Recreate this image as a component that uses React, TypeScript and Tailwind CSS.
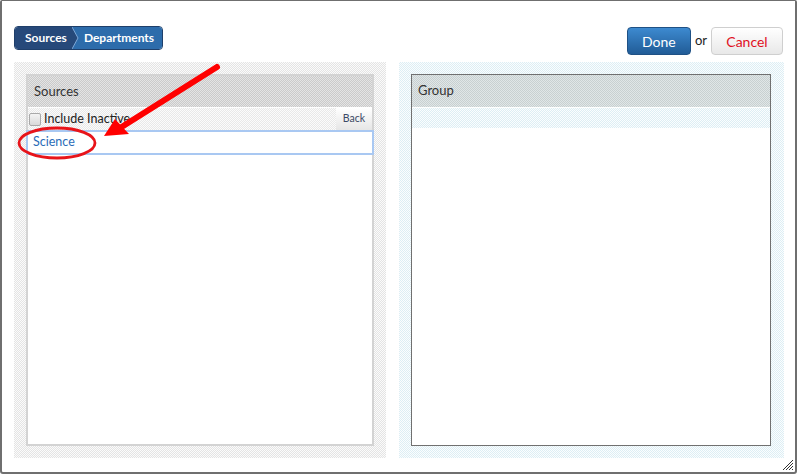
import React from "react";

const font = { fontFamily: "Lato, 'Open Sans', sans-serif" };

export default function App() {
  return (
    <div className="w-[798px] h-[475px] bg-white" style={font}>
      <div className="relative w-[797px] h-[474px] bg-white border-l-2 border-r-2 border-b-2 border-t border-[#6f6f6f] rounded-b-[3px] rounded-t-[2px] overflow-hidden">
        {/* top row */}
        <div className="flex justify-between pl-[12px] pr-[12px] h-[61px]">
          <div className="mt-[25px] flex h-[24px] rounded-[4px] overflow-hidden border border-[#1f3f6a] text-white text-[12px] font-bold leading-none">
            <div className="flex items-center pl-[10px] pr-[5px] bg-[#26497a]">Sources</div>
            <div className="relative w-[8px] bg-[#2d6cab]">
              <svg className="absolute inset-0" width="8" height="22" viewBox="0 0 8 22">
                <path d="M0 0 L6 11 L0 22 Z" fill="#26497a" />
                <path d="M0 0 L6 11 L0 22" fill="none" stroke="#7fa8d6" strokeWidth="1" />
              </svg>
            </div>
            <div className="flex items-center pl-[4px] pr-[8px] bg-[#2d6cab]">Departments</div>
          </div>
          <div className="mt-[26px] flex items-center h-[28px] gap-[4px]">
            <button className="h-[28px] w-[64px] rounded-[4px] bg-gradient-to-b from-[#3d8ad0] to-[#215c97] border border-[#1f5185] text-white text-[14px]">
              Done
            </button>
            <span className="text-[13px] text-[#222]">or</span>
            <button className="h-[28px] w-[72px] rounded-[4px] bg-gradient-to-b from-white to-[#e8e8e8] border border-[#cfcfcf] text-[#e0101e] text-[14px]">
              Cancel
            </button>
          </div>
        </div>

        {/* panels */}
        <div className="flex gap-[13px] pl-[12px]">
          {/* left */}
          <div className="w-[372px] h-[396px] p-[12px] bg-[repeating-conic-gradient(#e4e4e4_0_25%,#fbfbfb_0_50%)] bg-size-[2px_2px]">
            <div className="w-full h-full bg-white border-2 border-[#d3d3d3] flex flex-col">
              <div className="h-[32px] flex items-center pl-[6px] text-[13px] text-[#333] bg-[repeating-conic-gradient(#cacaca_0_25%,#e4e4e4_0_50%)] bg-size-[2px_2px] border-b border-white">
                Sources
              </div>
              <div className="h-[22px] flex items-center justify-between bg-[repeating-conic-gradient(#e8e8e8_0_25%,#fbfbfb_0_50%)] bg-size-[2px_2px]">
                <div className="flex items-center gap-[3px] pl-[1px]">
                  <span className="w-[12px] h-[13px] rounded-[2px] border border-[#a9a9a9] bg-gradient-to-b from-[#f4f4f4] to-[#d9d9d9]" />
                  <span className="text-[12.5px] text-[#222]">Include Inactive</span>
                </div>
                <div className="h-[22px] w-[36px] flex items-center justify-center text-[10.5px] text-[#3b4a66] bg-gradient-to-b from-white to-[#e6e6e6]">
                  Back
                </div>
              </div>
              <div className="h-[25px] flex items-center pl-[5px] text-[12.5px] text-[#2a6cb8] border-2 border-[#a9c8f2] -mx-[2px] bg-white">
                Science
              </div>
              <div className="flex-1" />
            </div>
          </div>
          {/* right */}
          <div className="w-[385px] h-[396px] pl-[12px] pr-[13px] py-[12px] bg-[repeating-conic-gradient(#ddeef4_0_25%,#fbfdfe_0_50%)] bg-size-[2px_2px]">
            <div className="w-full h-full bg-white border border-[#707070] flex flex-col">
              <div className="h-[33px] flex items-center pl-[6px] text-[13px] text-[#333] bg-[repeating-conic-gradient(#c8d0d1_0_25%,#e0e6e7_0_50%)] bg-size-[2px_2px] border-b border-white">
                Group
              </div>
              <div className="h-[20px] bg-[repeating-conic-gradient(#ddeef4_0_25%,#fbfdfe_0_50%)] bg-size-[2px_2px]" />
              <div className="flex-1" />
            </div>
          </div>
        </div>

        {/* resize grip */}
        <svg className="absolute right-[1px] bottom-[1px]" width="12" height="12" viewBox="0 0 12 12">
          <path d="M11 1 L1 11 M11 4 L4 11 M11 7 L7 11 M11 10 L10 11" stroke="#333" strokeWidth="1" />
        </svg>

        {/* annotation */}
        <svg className="absolute left-0 top-0 pointer-events-none" width="798" height="475" viewBox="0 0 798 475">
          <ellipse cx="55" cy="142" rx="38" ry="15" fill="none" stroke="#e8141a" strokeWidth="2.8" />
          <line x1="215" y1="66" x2="118" y2="127" stroke="#f00" strokeWidth="6" strokeLinecap="round" />
          <path d="M102 135 L113 118 L127 133 Z" fill="#f00" />
        </svg>
      </div>
    </div>
  );
}
